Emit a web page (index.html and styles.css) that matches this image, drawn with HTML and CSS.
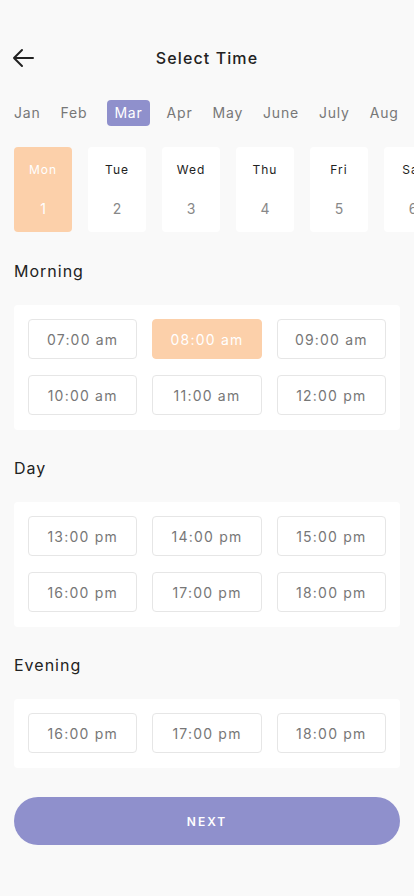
FILE: index.html
```html
<!DOCTYPE html>
<html lang="en">
<head>
<meta charset="utf-8">
<meta name="viewport" content="width=device-width, initial-scale=1">
<title>Select Time</title>
<link rel="stylesheet" href="styles.css">
</head>
<body>
<div class="screen">
  <header class="topbar">
    <button class="back" aria-label="Back">
      <svg width="22" height="20" viewBox="0 0 22 20" fill="none" stroke="#222" stroke-width="2" stroke-linecap="round" stroke-linejoin="round"><path d="M21 10H2M10 2L2 10L10 18"/></svg>
    </button>
    <h1 class="title">Select Time</h1>
  </header>

  <nav class="months">
    <span class="month">Jan</span>
    <span class="month">Feb</span>
    <span class="month active">Mar</span>
    <span class="month">Apr</span>
    <span class="month">May</span>
    <span class="month">June</span>
    <span class="month">July</span>
    <span class="month">Aug</span>
    <span class="month">Sep</span>
  </nav>

  <div class="days">
    <div class="day active"><span class="dname">Mon</span><span class="dnum">1</span></div>
    <div class="day"><span class="dname">Tue</span><span class="dnum">2</span></div>
    <div class="day"><span class="dname">Wed</span><span class="dnum">3</span></div>
    <div class="day"><span class="dname">Thu</span><span class="dnum">4</span></div>
    <div class="day"><span class="dname">Fri</span><span class="dnum">5</span></div>
    <div class="day"><span class="dname">Sat</span><span class="dnum">6</span></div>
  </div>

  <section class="section">
    <h2 class="label">Morning</h2>
    <div class="panel">
      <div class="slot">07:00 am</div>
      <div class="slot active">08:00 am</div>
      <div class="slot">09:00 am</div>
      <div class="slot">10:00 am</div>
      <div class="slot">11:00 am</div>
      <div class="slot">12:00 pm</div>
    </div>
  </section>

  <section class="section">
    <h2 class="label">Day</h2>
    <div class="panel">
      <div class="slot">13:00 pm</div>
      <div class="slot">14:00 pm</div>
      <div class="slot">15:00 pm</div>
      <div class="slot">16:00 pm</div>
      <div class="slot">17:00 pm</div>
      <div class="slot">18:00 pm</div>
    </div>
  </section>

  <section class="section">
    <h2 class="label">Evening</h2>
    <div class="panel">
      <div class="slot">16:00 pm</div>
      <div class="slot">17:00 pm</div>
      <div class="slot">18:00 pm</div>
    </div>
  </section>

  <button class="next">NEXT</button>
</div>
</body>
</html>
```

FILE: styles.css
```css
* { box-sizing: border-box; }
html, body {
  margin: 0;
  padding: 0;
  background: #f9f9f9;
}
body {
  font-family: Inter, Roboto, "Noto Sans", sans-serif;
  color: #222;
  width: 414px;
  overflow: hidden;
}
.screen {
  padding: 40px 14px 40px;
}
.topbar {
  position: relative;
  height: 36px;
  display: flex;
  align-items: center;
  justify-content: center;
}
.back {
  position: absolute;
  left: -2px;
  top: 8px;
  background: none;
  border: 0;
  padding: 0;
  width: 22px;
  height: 20px;
  display: flex;
}
.title {
  margin: 0;
  font-size: 16px;
  font-weight: 500;
  letter-spacing: 1.1px;
  color: #222;
}
.months {
  margin-top: 24px;
  display: flex;
  gap: 20px;
  white-space: nowrap;
  overflow: hidden;
  width: 400px;
}
.month {
  flex: none;
  font-size: 14px;
  line-height: 26px;
  letter-spacing: 0.8px;
  color: #777;
  border-radius: 4px;
}
.month.active {
  padding: 0 7px;
  margin: 0 -3px 0 0;
  background: #8f90cc;
  color: #fff;
}
.days {
  margin-top: 21px;
  display: flex;
  gap: 16px;
  width: 400px;
  overflow: hidden;
}
.day {
  flex: none;
  width: 58px;
  height: 85px;
  background: #fff;
  border-radius: 4px;
  display: flex;
  flex-direction: column;
  align-items: center;
  padding-top: 15px;
}
.dname {
  font-size: 12px;
  font-weight: 400;
  line-height: 16px;
  letter-spacing: 1px;
  color: #222;
}
.dnum {
  margin-top: 22px;
  font-size: 14px;
  line-height: 18px;
  color: #888;
}
.day.active { background: #fcd0aa; }
.day.active .dname,
.day.active .dnum { color: #fff; }
.section { margin-top: 29px; }
.section + .section { margin-top: 28px; }
.label {
  margin: 0;
  font-size: 16px;
  font-weight: 400;
  line-height: 20px;
  letter-spacing: 1px;
  color: #222;
}
.panel {
  margin-top: 24px;
  background: #fff;
  border-radius: 4px;
  padding: 14px 14px 15px;
  display: grid;
  grid-template-columns: repeat(3, 1fr);
  gap: 16px 15px;
}
.slot {
  height: 40px;
  border: 1px solid #e6e6e6;
  border-radius: 4px;
  display: flex;
  align-items: center;
  justify-content: center;
  font-size: 14px;
  letter-spacing: 1.2px;
  color: #777;
}
.slot.active {
  background: #fcd0aa;
  border-color: #fcd0aa;
  color: #fff;
}
.next {
  display: block;
  width: 100%;
  height: 48px;
  margin-top: 29px;
  border: 0;
  border-radius: 24px;
  background: #8f90cc;
  color: #fff;
  font-family: inherit;
  font-size: 12px;
  font-weight: 600;
  letter-spacing: 2px;
}
```
